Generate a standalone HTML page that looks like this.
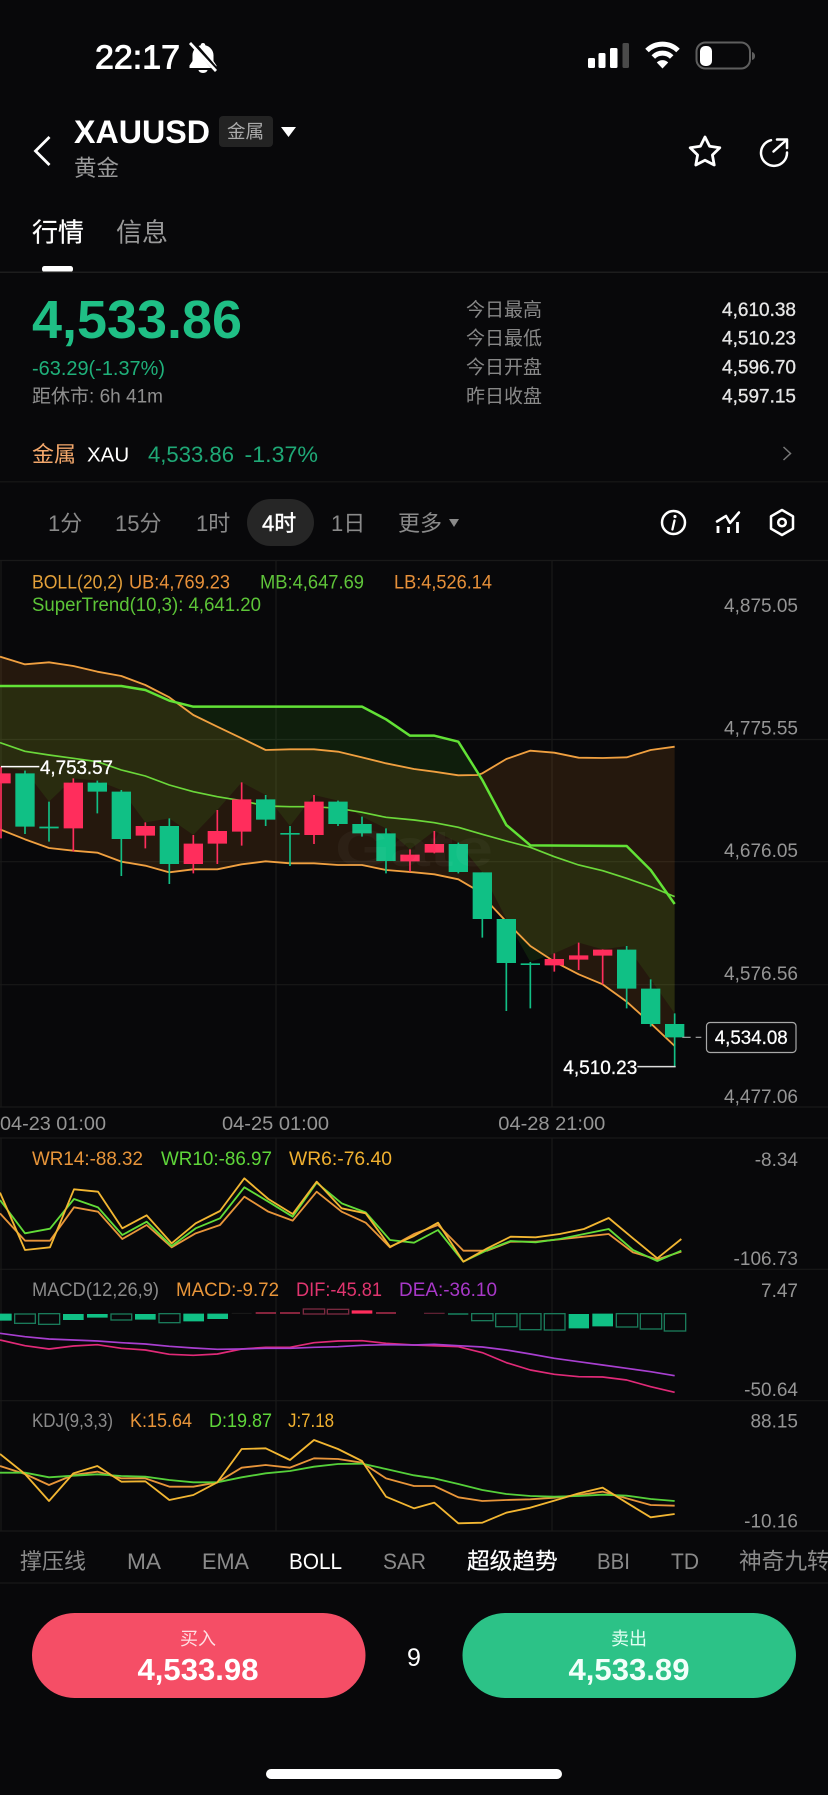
<!DOCTYPE html>
<html lang="zh">
<head>
<meta charset="utf-8">
<title>XAUUSD</title>
<style>
html,body{margin:0;padding:0;background:#08080a;width:828px;height:1795px;overflow:hidden}
svg{display:block;font-family:"Liberation Sans","Noto Sans CJK SC",sans-serif}
.b{font-weight:700}
.ax{font-size:19px;fill:#959595;text-anchor:end}
.tab{font-size:22px;fill:#8a8a8a}
.ind{font-size:22px;fill:#8a8a8a}
.ln{fill:none;stroke-linejoin:round}
</style>
</head>
<body>
<svg width="828" height="1795" viewBox="0 0 828 1795" xmlns="http://www.w3.org/2000/svg">
<rect width="828" height="1795" fill="#08080a"/>

<!-- status bar -->
<text x="95" y="68.5" font-size="33" fill="#fff" stroke="#fff" stroke-width=".9" textLength="85" lengthAdjust="spacingAndGlyphs">22:17</text>
<path d="M203 43c-1.400 0-2.300 1-2.300 2.200-5 1.200-8.200 5.300-8.200 10v5.800l-3 4.500v2.500h27v-2.500l-3-4.500v-5.800c0-4.700-3.200-8.800-8.200-10 0-1.200-.9-2.200-2.300-2.200z" fill="#fff"/>
<path d="M198.500 70a4.500 3 0 0 0 9 0z" fill="#fff"/>
<path d="M191 41l26 30" stroke="#08080a" stroke-width="5"/>
<path d="M190 43l26 28" stroke="#fff" stroke-width="2.800"/>

<rect x="588" y="58" width="7" height="10" rx="1.500" fill="#fff"/>
<rect x="598.500" y="53" width="7" height="15" rx="1.500" fill="#fff"/>
<rect x="610" y="48" width="7.500" height="20" rx="1.500" fill="#fff"/>
<rect x="622.500" y="43" width="6.500" height="25" rx="1.500" fill="#4a4a4a"/>
<path d="M647 50.500A22 22 0 0 1 678 50.500" fill="none" stroke="#fff" stroke-width="5"/>
<path d="M653.300 57A13 13 0 0 1 671.700 57" fill="none" stroke="#fff" stroke-width="5"/>
<path d="M662.500 68.500L656.800 62.500A8 8 0 0 1 668.200 62.500Z" fill="#fff"/>
<rect x="696.500" y="42.500" width="53.500" height="26" rx="9" fill="none" stroke="#5e5e5e" stroke-width="2"/>
<rect x="700" y="46" width="12" height="20" rx="5" fill="#fff"/>
<path d="M752 52c2 .5 3 2 3 4s-1 3.500-3 4z" fill="#5e5e5e"/>

<!-- header -->
<path d="M49.500 137L35.500 151L49.500 165" fill="none" stroke="#fff" stroke-width="2.800"/>
<text x="74" y="143" font-size="32" class="b" fill="#fff" textLength="136" lengthAdjust="spacingAndGlyphs">XAUUSD</text>
<rect x="219" y="116" width="54" height="31" rx="4" fill="#232323"/>
<text x="227" y="138" font-size="18.500" fill="#aaa">金属</text>
<path d="M281 127H296L288.500 137Z" fill="#fff"/>
<text x="74" y="176" font-size="22.500" fill="#999">黄金</text>
<path d="M705 137L709.600 146.300 719.800 147.800 712.400 155 714.200 165 705 160.200 695.800 165 697.600 155 690.200 147.800 700.400 146.300Z" fill="none" stroke="#fff" stroke-width="2.800" stroke-linejoin="round"/>
<path d="M771 140.200A13 13 0 1 0 787 152.500" fill="none" stroke="#fff" stroke-width="2.500" stroke-linecap="round"/>
<path d="M777 139.500H787V148M787 139.500L773.500 151.500" fill="none" stroke="#fff" stroke-width="2.500" stroke-linecap="round" stroke-linejoin="round"/>

<text x="32" y="241.500" font-size="26" fill="#fff" stroke="#fff" stroke-width=".25">行情</text>
<text x="116" y="241.500" font-size="26" fill="#999">信息</text>
<rect x="42" y="266" width="31" height="6" rx="2.500" fill="#fff"/>
<rect x="0" y="271.500" width="828" height="1.500" fill="#1d1d1d"/>

<!-- summary -->
<text x="32" y="338" font-size="54" class="b" fill="#1fbf85" textLength="210" lengthAdjust="spacingAndGlyphs">4,533.86</text>
<text x="32" y="375" font-size="20" fill="#1fb07a" textLength="133" lengthAdjust="spacingAndGlyphs">-63.29(-1.37%)</text>
<text x="32" y="402.500" font-size="19" fill="#8f8f8f" textLength="131" lengthAdjust="spacingAndGlyphs">距休市: 6h 41m</text>

<g font-size="19" fill="#888">
<text x="466" y="316">今日最高</text>
<text x="466" y="344.300">今日最低</text>
<text x="466" y="373.700">今日开盘</text>
<text x="466" y="402.700">昨日收盘</text>
</g>
<g font-size="19" fill="#e6e6e6" stroke="#e6e6e6" stroke-width=".3" text-anchor="end">
<text x="796" y="316">4,610.38</text>
<text x="796" y="344.300">4,510.23</text>
<text x="796" y="373.700">4,596.70</text>
<text x="796" y="402.700">4,597.15</text>
</g>

<text x="32" y="462" font-size="22" fill="#f3a76b">金属</text>
<text x="87" y="461.500" font-size="20.500" fill="#fff">XAU</text>
<text x="148" y="462" font-size="22" fill="#1fa876" textLength="86" lengthAdjust="spacingAndGlyphs">4,533.86</text>
<text x="244.500" y="462" font-size="22" fill="#1fa876" textLength="73.500" lengthAdjust="spacingAndGlyphs">-1.37%</text>
<path d="M783.500 447L790.500 453.500 783.500 460" fill="none" stroke="#777" stroke-width="1.500"/>
<rect x="0" y="481" width="828" height="1.500" fill="#141414"/>

<!-- periods -->
<rect x="247" y="499" width="67" height="47" rx="23.500" fill="#262626"/>
<text x="48" y="531" class="tab">1分</text>
<text x="115" y="531" class="tab">15分</text>
<text x="196" y="531" class="tab">1时</text>
<text x="262" y="531" font-size="22" fill="#fff" stroke="#fff" stroke-width=".4">4时</text>
<text x="331" y="531" class="tab">1日</text>
<text x="398" y="531" class="tab">更多</text>
<path d="M449 519H459L454 527Z" fill="#8a8a8a"/>

<circle cx="673.500" cy="522.500" r="11.500" fill="none" stroke="#fff" stroke-width="2.500"/>
<circle cx="675" cy="516.500" r="1.600" fill="#fff"/>
<path d="M674.500 520.500L672.400 529.500" stroke="#fff" stroke-width="2.300" stroke-linecap="round"/>
<path d="M717 521.500L726 516 730 523 739 512.500" fill="none" stroke="#fff" stroke-width="2.500" stroke-linejoin="round" stroke-linecap="round"/>
<path d="M718 526V533M728.500 527V533M737.500 522V533" stroke="#fff" stroke-width="2.800"/>
<path d="M782 510L793 516.300V528.700L782 535 771 528.700V516.300Z" fill="none" stroke="#fff" stroke-width="2.500" stroke-linejoin="round"/>
<circle cx="782" cy="522.500" r="3.800" fill="none" stroke="#fff" stroke-width="2.500"/>

<!-- grid -->
<g stroke="#191919" stroke-width="1.200">
<path d="M0 560.500H828M0 739.500H828M0 861.700H828M0 984.700H828M0 1107H828M0 1138H828M0 1269.300H828M0 1400.700H828M0 1531H828M0 1583H828"/>
<path d="M1 560V1107M1 1138V1531M276 560V1107M276 1138V1531M552 560V1107M552 1138V1531"/>
</g>

<!-- main chart -->
<g transform="translate(0,560) scale(.33333)">
<path fill="#f08c28" fill-opacity=".13" d="M0 290L75 313 147 307 220 318 292 335 364 348 436 375 508 412 580 465 652 500 725 535 797 570 870 568 942 568 1014 575 1086 592 1158 610 1242 627 1303 635 1375 646 1432 645 1447 640 1519 597 1591 572 1663 578 1736 593 1808 594 1880 592 1952 570 2024 560 2024 1458 1952 1390 1880 1325 1808 1273 1736 1243 1663 1205 1591 1158 1519 1085 1475 1038 1447 1000 1375 958 1303 943 1242 937 1158 930 1086 915 1014 915 942 910 870 910 797 904 725 913 652 928 580 928 508 937 436 917 364 905 292 878 220 872 147 864 75 838 0 808Z"/>
<path fill="#4ee02c" fill-opacity=".1" d="M0 378L364 378 436 390 508 422 580 440 1086 440 1158 478 1230 527 1303 527 1375 545 1447 660 1519 795 1591 856 1880 858 1952 930 2024 1032 2024 1360 1952 1258 1880 1158 1808 1168 1736 1148 1663 1180 1591 1206 1519 1077 1447 937 1375 848 1303 813 1230 868 1158 805 1086 770 1014 722 942 705 870 798 797 705 725 667 652 750 580 825 508 775 436 787 364 690 292 662 220 655 147 725 75 632 3 620 0 620Z"/>

<polyline class="ln" stroke="#f0a040" stroke-width="5.500" points="0,290 75,313 147,307 220,318 292,335 364,348 436,375 508,412 580,465 652,500 725,535 797,570 870,568 942,568 1014,575 1086,592 1158,610 1242,627 1303,635 1375,646 1432,645 1447,640 1519,597 1591,572 1663,578 1736,593 1808,594 1880,592 1952,570 2024,560"/>
<polyline class="ln" stroke="#f0a040" stroke-width="5.500" points="0,808 75,838 147,864 220,872 292,878 364,905 436,917 508,937 580,928 652,928 725,913 797,904 870,910 942,910 1014,915 1086,915 1158,930 1242,937 1303,943 1375,958 1447,1000 1475,1038 1519,1085 1591,1158 1663,1205 1736,1243 1808,1273 1880,1325 1952,1390 2024,1458"/>
<polyline class="ln" stroke="#6bd83a" stroke-width="5" points="0,548 75,574 147,585 220,595 292,605 364,630 436,648 508,675 580,695 652,710 725,722 797,738 870,740 942,740 1014,745 1086,757 1158,772 1242,780 1303,788 1375,802 1447,823 1519,843 1591,862 1663,890 1736,915 1808,932 1880,955 1952,980 2024,1010"/>
<polyline class="ln" stroke="#62e236" stroke-width="7.500" points="0,378 364,378 436,390 508,422 580,440 1086,440 1158,478 1230,527 1303,527 1375,545 1447,660 1519,795 1591,856 1880,858 1952,930 2024,1032"/>

<!-- candles green -->
<path stroke="#12bf85" stroke-width="5" fill="none" d="M75 632V822M147 725V845M292 662V760M364 690V948M508 775V972M797 705V798M870 798V918M1014 722V798M1086 770V830M1158 805V940M1375 848V940M1447 937V1133M1519 1077V1353M1591 1206V1345M1880 1158V1345M1952 1258V1400M2024 1360V1520"/>
<path fill="#10c085" d="M46 640H104V800H46ZM118 800H176V805H118ZM263 668H321V695H263ZM335 695H393V837H335ZM479 798H537V912H479ZM768 718H826V779H768ZM841 819H899V824H841ZM985 725H1043V792H985ZM1057 792H1115V820H1057ZM1129 820H1187V903H1129ZM1346 852H1404V936H1346ZM1418 937H1476V1077H1418ZM1490 1077H1548V1209H1490ZM1562 1210H1620V1215H1562ZM1851 1169H1909V1286H1851ZM1923 1286H1981V1392H1923ZM1995 1392H2053V1432H1995Z"/>
<!-- candles red -->
<path stroke="#ff2d5c" stroke-width="5" fill="none" d="M3 620V835M220 655V875M436 787V865M580 825V940M652 750V912M725 667V857M942 705V852M1230 868V935M1303 813V880M1663 1180V1235M1736 1148V1230M1808 1168V1273"/>
<path fill="#ff2d5c" d="M-26 640H32V670H-26ZM191 668H249V805H191ZM407 798H465V827H407ZM551 851H609V912H551ZM623 813H681V851H623ZM696 718H754V815H696ZM913 725H971V825H913ZM1201 884H1259V904H1201ZM1274 852H1332V878H1274ZM1634 1197H1692V1216H1634ZM1707 1186H1765V1199H1707ZM1779 1169H1837V1187H1779Z"/>

<!-- markers -->
<path d="M3 620H118" stroke="#fff" stroke-width="4.500"/>
<path d="M1912 1520H2027" stroke="#ddd" stroke-width="4.500"/>
<path d="M2047 1432H2072M2087 1432H2104" stroke="#aaa" stroke-width="3.500"/>
</g>

<text x="335" y="866" font-size="52" class="b" fill="#fff" fill-opacity=".035" textLength="158" lengthAdjust="spacingAndGlyphs">Gate</text>

<rect x="706.500" y="1022.500" width="89.500" height="30" rx="3.500" fill="#0a0a0c" stroke="#a8a8a8" stroke-width="1.200"/>
<text x="714.700" y="1044" font-size="19" fill="#fff" stroke="#fff" stroke-width=".25" textLength="73" lengthAdjust="spacingAndGlyphs">4,534.08</text>
<text x="40" y="774" font-size="19" fill="#fff" stroke="#fff" stroke-width=".3" textLength="73" lengthAdjust="spacingAndGlyphs">4,753.57</text>
<text x="563.300" y="1074" font-size="19" fill="#fff" stroke="#fff" stroke-width=".3" textLength="74" lengthAdjust="spacingAndGlyphs">4,510.23</text>

<!-- chart legends -->
<g font-size="19">
<text x="32" y="588.500" fill="#e3a03a" textLength="91" lengthAdjust="spacingAndGlyphs">BOLL(20,2)</text>
<text x="129" y="588.500" fill="#e8913a" textLength="101" lengthAdjust="spacingAndGlyphs">UB:4,769.23</text>
<text x="260" y="588.500" fill="#5fc43a" textLength="104" lengthAdjust="spacingAndGlyphs">MB:4,647.69</text>
<text x="394" y="588.500" fill="#e8913a" textLength="98" lengthAdjust="spacingAndGlyphs">LB:4,526.14</text>
<text x="32" y="611" fill="#5dc538" textLength="229" lengthAdjust="spacingAndGlyphs">SuperTrend(10,3): 4,641.20</text>

<text x="32" y="1165" fill="#e8953a" textLength="111" lengthAdjust="spacingAndGlyphs">WR14:-88.32</text>
<text x="161" y="1165" fill="#5fd63a" textLength="111" lengthAdjust="spacingAndGlyphs">WR10:-86.97</text>
<text x="289" y="1165" fill="#f0b030" textLength="103" lengthAdjust="spacingAndGlyphs">WR6:-76.40</text>

<text x="32" y="1296" fill="#8a8a8a" textLength="127" lengthAdjust="spacingAndGlyphs">MACD(12,26,9)</text>
<text x="176" y="1296" fill="#e8953a" textLength="103" lengthAdjust="spacingAndGlyphs">MACD:-9.72</text>
<text x="296" y="1296" fill="#e0356f" textLength="86" lengthAdjust="spacingAndGlyphs">DIF:-45.81</text>
<text x="399" y="1296" fill="#a838c8" textLength="98" lengthAdjust="spacingAndGlyphs">DEA:-36.10</text>

<text x="32" y="1427" fill="#8a8a8a" textLength="81" lengthAdjust="spacingAndGlyphs">KDJ(9,3,3)</text>
<text x="130" y="1427" fill="#e8953a" textLength="62" lengthAdjust="spacingAndGlyphs">K:15.64</text>
<text x="209" y="1427" fill="#5fd63a" textLength="63" lengthAdjust="spacingAndGlyphs">D:19.87</text>
<text x="288" y="1427" fill="#f0b030" textLength="46" lengthAdjust="spacingAndGlyphs">J:7.18</text>
</g>

<!-- axis labels -->
<text x="798" y="611.800" class="ax">4,875.05</text>
<text x="798" y="734.500" class="ax">4,775.55</text>
<text x="798" y="856.800" class="ax">4,676.05</text>
<text x="798" y="980.100" class="ax">4,576.56</text>
<text x="798" y="1102.800" class="ax">4,477.06</text>
<text x="798" y="1166" class="ax">-8.34</text>
<text x="798" y="1265" class="ax">-106.73</text>
<text x="798" y="1297" class="ax">7.47</text>
<text x="798" y="1396" class="ax">-50.64</text>
<text x="798" y="1427.500" class="ax">88.15</text>
<text x="798" y="1527.500" class="ax">-10.16</text>

<g font-size="19" fill="#959595">
<text x="0" y="1130" textLength="106" lengthAdjust="spacingAndGlyphs">04-23 01:00</text>
<text x="222" y="1130" textLength="107" lengthAdjust="spacingAndGlyphs">04-25 01:00</text>
<text x="498.300" y="1130" textLength="107" lengthAdjust="spacingAndGlyphs">04-28 21:00</text>
</g>

<!-- WR + MACD -->
<g transform="translate(0,1130) scale(.33333)">
<polyline class="ln" stroke="#e8953a" stroke-width="5.500" points="0,250 75,332 150,332 222,232 294,245 367,327 440,285 515,352 587,310 660,285 733,200 805,245 878,272 950,185 1025,245 1097,278 1170,352 1242,312 1314,285 1390,362 1462,362 1532,335 1607,335 1679,328 1752,320 1826,312 1899,367 1972,388 2044,365"/>
<polyline class="ln" stroke="#62dc38" stroke-width="5.500" points="0,210 75,310 150,296 222,207 294,232 367,315 440,275 515,348 587,295 660,265 733,172 805,215 878,260 950,158 1025,220 1097,247 1170,330 1242,338 1314,300 1390,395 1462,360 1532,333 1607,337 1679,327 1752,312 1826,297 1899,360 1972,393 2044,362"/>
<polyline class="ln" stroke="#f2b632" stroke-width="5.500" points="0,188 75,360 150,352 222,178 294,185 367,295 440,256 515,340 587,280 660,243 733,145 805,207 878,252 950,155 1025,235 1097,250 1170,350 1242,318 1314,278 1390,395 1462,355 1532,320 1607,322 1679,312 1752,297 1826,264 1899,325 1972,385 2044,327"/>

<!-- MACD filled green -->
<path fill="#10c085" d="M-26 551H35V572H-26ZM189 552H251V570H189ZM261 552H323V563H261ZM405 552H467V569H405ZM550 551H612V574H550ZM622 551H684V567H622ZM1706 552H1767V595H1706ZM1777 551H1839V589H1777Z"/>
<!-- MACD hollow green -->
<g fill="none" stroke="#1a7a5a" stroke-width="4">
<rect x="44" y="552" width="62" height="28"/>
<rect x="116" y="551" width="63" height="32"/>
<rect x="333" y="552" width="62" height="18"/>
<rect x="477" y="551" width="63" height="27"/>
<rect x="1415" y="551" width="64" height="21"/>
<rect x="1487" y="551" width="64" height="39"/>
<rect x="1560" y="551" width="63" height="48"/>
<rect x="1633" y="551" width="62" height="49"/>
<rect x="1849" y="551" width="64" height="40"/>
<rect x="1921" y="551" width="64" height="46"/>
<rect x="1993" y="551" width="64" height="52"/>
</g>
<g fill="none" stroke="#7a2a40" stroke-width="4">
<rect x="910" y="537" width="64" height="15"/>
<rect x="982" y="538" width="64" height="14"/>
</g>
<path fill="#ff2d5c" d="M1055 541H1117V551H1055Z"/>
<path d="M767 549H828M840 549H900M1128 549H1188" stroke="#d0345a" stroke-width="3.500"/>
<path d="M1272 550H1334" stroke="#6a2438" stroke-width="3.500"/>
<path d="M1344 552H1405" stroke="#1a9a70" stroke-width="3.500"/>
<path d="M695 550H755" stroke="#1a1a1a" stroke-width="3"/>

<polyline class="ln" stroke="#e02a78" stroke-width="5" points="0,630 75,647 147,657 220,648 292,644 364,655 436,660 508,673 580,676 652,672 725,657 797,652 870,652 942,638 1014,633 1086,632 1158,640 1242,645 1375,650 1447,668 1519,698 1591,720 1663,733 1736,740 1808,741 1880,750 1952,770 2024,787"/>
<polyline class="ln" stroke="#a83fd0" stroke-width="5" points="0,610 75,620 147,627 220,630 292,633 364,638 436,642 508,649 580,654 652,658 725,657 797,655 870,655 942,652 1014,650 1086,646 1158,644 1242,645 1303,643 1375,647 1447,651 1519,660 1591,672 1663,685 1736,695 1808,705 1880,715 1952,725 2024,737"/>
</g>

<!-- KDJ -->
<g transform="translate(0,1400) scale(.33333)">
<polyline class="ln" stroke="#e8953a" stroke-width="5.500" points="0,198 75,222 147,255 220,225 292,215 364,235 436,235 508,260 580,260 652,247 725,203 797,195 870,203 942,175 1014,177 1086,188 1158,235 1242,258 1303,258 1375,292 1447,303 1519,300 1591,298 1663,293 1736,285 1808,275 1880,295 1952,315 2024,317"/>
<polyline class="ln" stroke="#55d03a" stroke-width="5.500" points="0,218 75,218 147,232 220,227 292,223 364,228 436,230 508,240 580,247 652,247 725,232 797,220 870,213 942,200 1014,192 1086,191 1158,207 1242,226 1303,235 1375,252 1447,270 1519,282 1591,288 1663,290 1736,288 1808,284 1880,287 1952,297 2024,303"/>
<polyline class="ln" stroke="#f2b632" stroke-width="5.500" points="0,162 75,222 147,303 220,220 292,198 364,245 436,244 508,300 580,285 652,247 725,147 797,145 870,180 942,120 1014,147 1086,183 1158,290 1242,325 1303,308 1375,370 1447,368 1519,338 1591,323 1663,302 1736,280 1808,263 1880,308 1952,352 2024,342"/>
</g>

<!-- indicator tabs -->
<text x="20" y="1569" class="ind">撑压线</text>
<text x="127" y="1569" class="ind" textLength="34" lengthAdjust="spacingAndGlyphs">MA</text>
<text x="202" y="1569" class="ind" textLength="47" lengthAdjust="spacingAndGlyphs">EMA</text>
<text x="289" y="1569" font-size="22" fill="#fff" textLength="53" lengthAdjust="spacingAndGlyphs">BOLL</text>
<text x="383" y="1569" class="ind" textLength="43" lengthAdjust="spacingAndGlyphs">SAR</text>
<text x="467" y="1569" font-size="22.700" fill="#fff" stroke="#fff" stroke-width=".2">超级趋势</text>
<text x="597" y="1569" class="ind" textLength="33" lengthAdjust="spacingAndGlyphs">BBI</text>
<text x="671" y="1569" class="ind" textLength="28" lengthAdjust="spacingAndGlyphs">TD</text>
<text x="739" y="1569" font-size="22.700" fill="#8a8a8a">神奇九转</text>

<!-- action buttons -->
<rect x="32" y="1613" width="333.500" height="85" rx="42.500" fill="#f54e66"/>
<text x="198" y="1645" font-size="18" fill="#ffdfe3" text-anchor="middle">买入</text>
<text x="198" y="1680" font-size="31" class="b" fill="#fff" text-anchor="middle" textLength="121" lengthAdjust="spacingAndGlyphs">4,533.98</text>
<rect x="462.500" y="1613" width="333.500" height="85" rx="42.500" fill="#2cc287"/>
<text x="629" y="1645" font-size="18" fill="#e2fff3" text-anchor="middle">卖出</text>
<text x="629" y="1680" font-size="31" class="b" fill="#f2fffa" text-anchor="middle" textLength="121" lengthAdjust="spacingAndGlyphs">4,533.89</text>
<text x="414" y="1666" font-size="25" fill="#fff" text-anchor="middle">9</text>

<rect x="266" y="1769" width="296" height="10" rx="5" fill="#fff"/>
</svg>
</body>
</html>
